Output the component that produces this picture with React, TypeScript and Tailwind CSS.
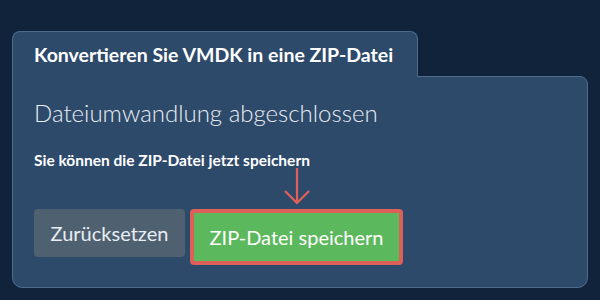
export default function App() {
  return (
    <div className="min-h-screen bg-[#10233a] px-3 pt-[31px] font-['Lato','Noto_Sans',sans-serif]">
      <div className="w-[576px]">
        {/* Tab */}
        <div className="relative z-10 -mb-px flex h-[46px] w-[406px] items-center rounded-t-lg border border-b-0 border-[#4d6b8c] bg-[#2e4a6b] pl-[21px] text-[19.5px] font-bold text-white">
          Konvertieren Sie VMDK in eine ZIP-Datei
        </div>

        {/* Panel */}
        <div className="rounded-b-[10px] rounded-tr-lg border border-[#4d6b8c] bg-[#2e4a6b] px-[21px] pb-[22px] pt-[21px]">
          <h2 className="text-[24px] font-light leading-[30px] text-[#e8edf2]">Dateiumwandlung abgeschlossen</h2>
          <p className="mt-[22px] text-[15.5px] font-bold leading-5 text-white">
            Sie können die ZIP-Datei jetzt speichern
          </p>

          <div className="mt-[39px] flex items-start gap-[5px]">
            <button className="h-12 w-[151px] rounded-[4px] bg-[#4f6071] text-[20px] text-[#e8eef4]">
              Zurücksetzen
            </button>
            <div className="relative">
              <svg
                className="absolute bottom-full left-1/2 mb-[3px] -translate-x-1/2"
                width="28"
                height="38"
                viewBox="0 0 28 38"
                fill="none"
                stroke="#e0605a"
                strokeWidth="2.2"
              >
                <path d="M14 0V35" />
                <path d="M2 23L14 35L26 23" />
              </svg>
              <button className="h-14 w-[213px] rounded-[4px] border-4 border-[#dd5f5a] bg-[#5cb85c] text-[20px] text-white">
                ZIP-Datei speichern
              </button>
            </div>
          </div>
        </div>
      </div>
    </div>
  );
}
